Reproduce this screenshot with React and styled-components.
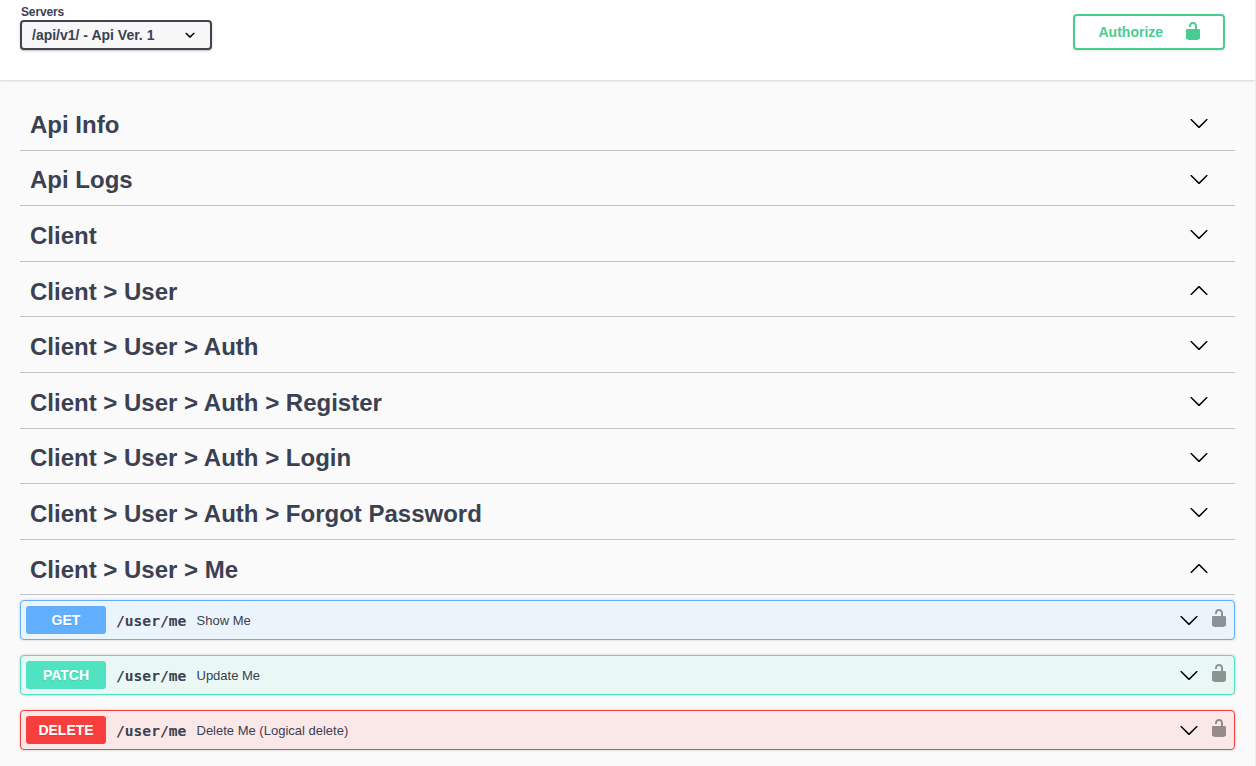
import React from "react";
import styled, { createGlobalStyle } from "styled-components";

const GlobalStyle = createGlobalStyle`
  *, *::before, *::after { box-sizing: border-box; }
  body {
    margin: 0;
    background: #fafafa;
    color: #3b4151;
    font-family: "Liberation Sans", Arial, sans-serif;
  }
`;

const Page = styled.div`
  height: 766px;
  overflow: hidden;
  border-right: 1px solid #ededed;
`;

const SchemeBar = styled.header`
  display: flex;
  justify-content: space-between;
  align-items: flex-start;
  height: 80px;
  padding: 5px 30px 0 20px;
  background: #fff;
  box-shadow: 0 1px 2px rgba(0, 0, 0, 0.15);
`;

const ServerField = styled.label`
  display: flex;
  flex-direction: column;
  font-size: 12px;
  font-weight: 700;
  line-height: 14px;
`;

const ServerLabel = styled.span`
  padding-left: 1px;
  font-size: 12px;
  letter-spacing: -0.15px;
`;

const ServerSelect = styled.span`
  display: flex;
  align-items: center;
  justify-content: space-between;
  width: 192px;
  height: 30px;
  margin-top: 1px;
  padding: 0 10px;
  border: 2px solid #41444e;
  border-radius: 4px;
  background: #f7f7f7;
  box-shadow: 0 1px 2px rgba(0, 0, 0, 0.25);
  font-size: 14px;
`;

const AuthorizeButton = styled.button`
  display: flex;
  align-items: center;
  justify-content: space-between;
  width: 152px;
  height: 36px;
  margin-top: 9px;
  padding: 0 20px 0 23.5px;
  border: 2px solid #49cc90;
  border-radius: 4px;
  background: transparent;
  box-shadow: 0 1px 2px rgba(0, 0, 0, 0.1);
  color: #49cc90;
  font: 700 14px "Liberation Sans", Arial, sans-serif;

  svg { position: relative; top: -1px; }
`;

const Sections = styled.main`
  padding: 15px 20px 0;
`;

const TagHeader = styled.h3`
  display: flex;
  align-items: center;
  justify-content: space-between;
  height: 55.6px;
  margin: 0;
  padding: 5.05px 26px 0 10px;
  border-bottom: 1px solid rgba(59, 65, 81, 0.3);
  font-size: 24px;
  line-height: 28px;

  svg { margin-top: -3.45px; }
`;

const Operations = styled.div`
  display: flex;
  flex-direction: column;
  gap: 15px;
  padding-top: 5px;
`;

const Operation = styled.div`
  display: flex;
  align-items: center;
  height: 40px;
  padding: 0 5px;
  border: 1px solid ${(p) => p.$color};
  border-radius: 4px;
  background: ${(p) => p.$background};
  box-shadow: 0 0 3px rgba(0, 0, 0, 0.19);
`;

const Method = styled.span`
  width: 80px;
  height: 28px;
  border-radius: 3px;
  background: ${(p) => p.$color};
  color: #fff;
  font-size: 14px;
  font-weight: 700;
  line-height: 28px;
  text-align: center;
  text-shadow: 0 1px 0 rgba(0, 0, 0, 0.1);
`;

const Path = styled.span`
  width: 70.5px;
  margin-left: 10px;
  font: 700 14.6px "DejaVu Sans Mono", monospace;
  white-space: nowrap;
`;

const Summary = styled.span`
  flex: 1;
  margin-left: 10px;
  padding-top: 2px;
  font-size: 13px;
  line-height: 16px;
`;

const LockSlot = styled.span`
  display: flex;
  margin: -4px 0 0 10px;
  color: #000;
  opacity: 0.4;
`;

const Chevron = ({ up }) => (
  <svg width="20" height="20" viewBox="0 0 20 20">
    {up ? (
      <path d="M17.418 14.908c.272.268.709.268.979 0s.271-.701 0-.969l-7.908-7.83c-.27-.268-.707-.268-.979 0l-7.908 7.83c-.27.268-.27.701 0 .969.271.268.709.268.979 0L10 7.767l7.418 7.141z" />
    ) : (
      <path d="M17.418 6.109c.272-.268.709-.268.979 0s.271.701 0 .969l-7.908 7.83c-.27.268-.707.268-.979 0l-7.908-7.83c-.27-.268-.27-.701 0-.969.271-.268.709-.268.979 0L10 13.25l7.418-7.141z" />
    )}
  </svg>
);

const SelectArrow = () => (
  <svg width="20" height="20" viewBox="0 0 20 20">
    <path d="M13.418 7.859c.271-.268.709-.268.978 0 .27.268.272.701 0 .969l-3.908 3.83c-.27.268-.707.268-.979 0l-3.908-3.83c-.27-.267-.27-.701 0-.969.271-.268.709-.268.978 0L10 11l3.418-3.141z" />
  </svg>
);

const Unlocked = () => (
  <svg width="20" height="20" viewBox="0 0 20 20" fill="currentColor">
    <path d="M15.8 8H14V5.6C14 2.703 12.665 1 10 1 7.334 1 6 2.703 6 5.6V6h2v-.801C8 3.754 8.797 3 10 3c1.203 0 2 .754 2 2.199V8H4c-.553 0-1 .646-1 1.199V17c0 .549.428 1.139.951 1.307l1.197.387C5.672 18.861 6.55 19 7.1 19h5.8c.549 0 1.428-.139 1.951-.307l1.196-.387c.524-.167.953-.757.953-1.306V9.199C17 8.646 16.352 8 15.8 8z" />
  </svg>
);

const tags = [
  { name: "Api Info" },
  { name: "Api Logs" },
  { name: "Client" },
  { name: "Client > User", open: true },
  { name: "Client > User > Auth" },
  { name: "Client > User > Auth > Register" },
  { name: "Client > User > Auth > Login" },
  { name: "Client > User > Auth > Forgot Password" },
  { name: "Client > User > Me", open: true },
];

const operations = [
  { method: "GET", summary: "Show Me", color: "#61affe", background: "#ebf3fb" },
  { method: "PATCH", summary: "Update Me", color: "#50e3c2", background: "#e9f8f4" },
  { method: "DELETE", summary: "Delete Me (Logical delete)", color: "#f93e3e", background: "#fae7e7" },
];

export default function App() {
  return (
    <Page>
      <GlobalStyle />
      <SchemeBar>
        <ServerField>
          <ServerLabel>Servers</ServerLabel>
          <ServerSelect>
            /api/v1/ - Api Ver. 1
            <SelectArrow />
          </ServerSelect>
        </ServerField>
        <AuthorizeButton>
          Authorize
          <Unlocked />
        </AuthorizeButton>
      </SchemeBar>
      <Sections>
        {tags.map((tag) => (
          <TagHeader key={tag.name}>
            {tag.name}
            <Chevron up={tag.open} />
          </TagHeader>
        ))}
        <Operations>
          {operations.map((op) => (
            <Operation key={op.method} $color={op.color} $background={op.background}>
              <Method $color={op.color}>{op.method}</Method>
              <Path>/user/me</Path>
              <Summary>{op.summary}</Summary>
              <Chevron />
              <LockSlot>
                <Unlocked />
              </LockSlot>
            </Operation>
          ))}
        </Operations>
      </Sections>
    </Page>
  );
}
